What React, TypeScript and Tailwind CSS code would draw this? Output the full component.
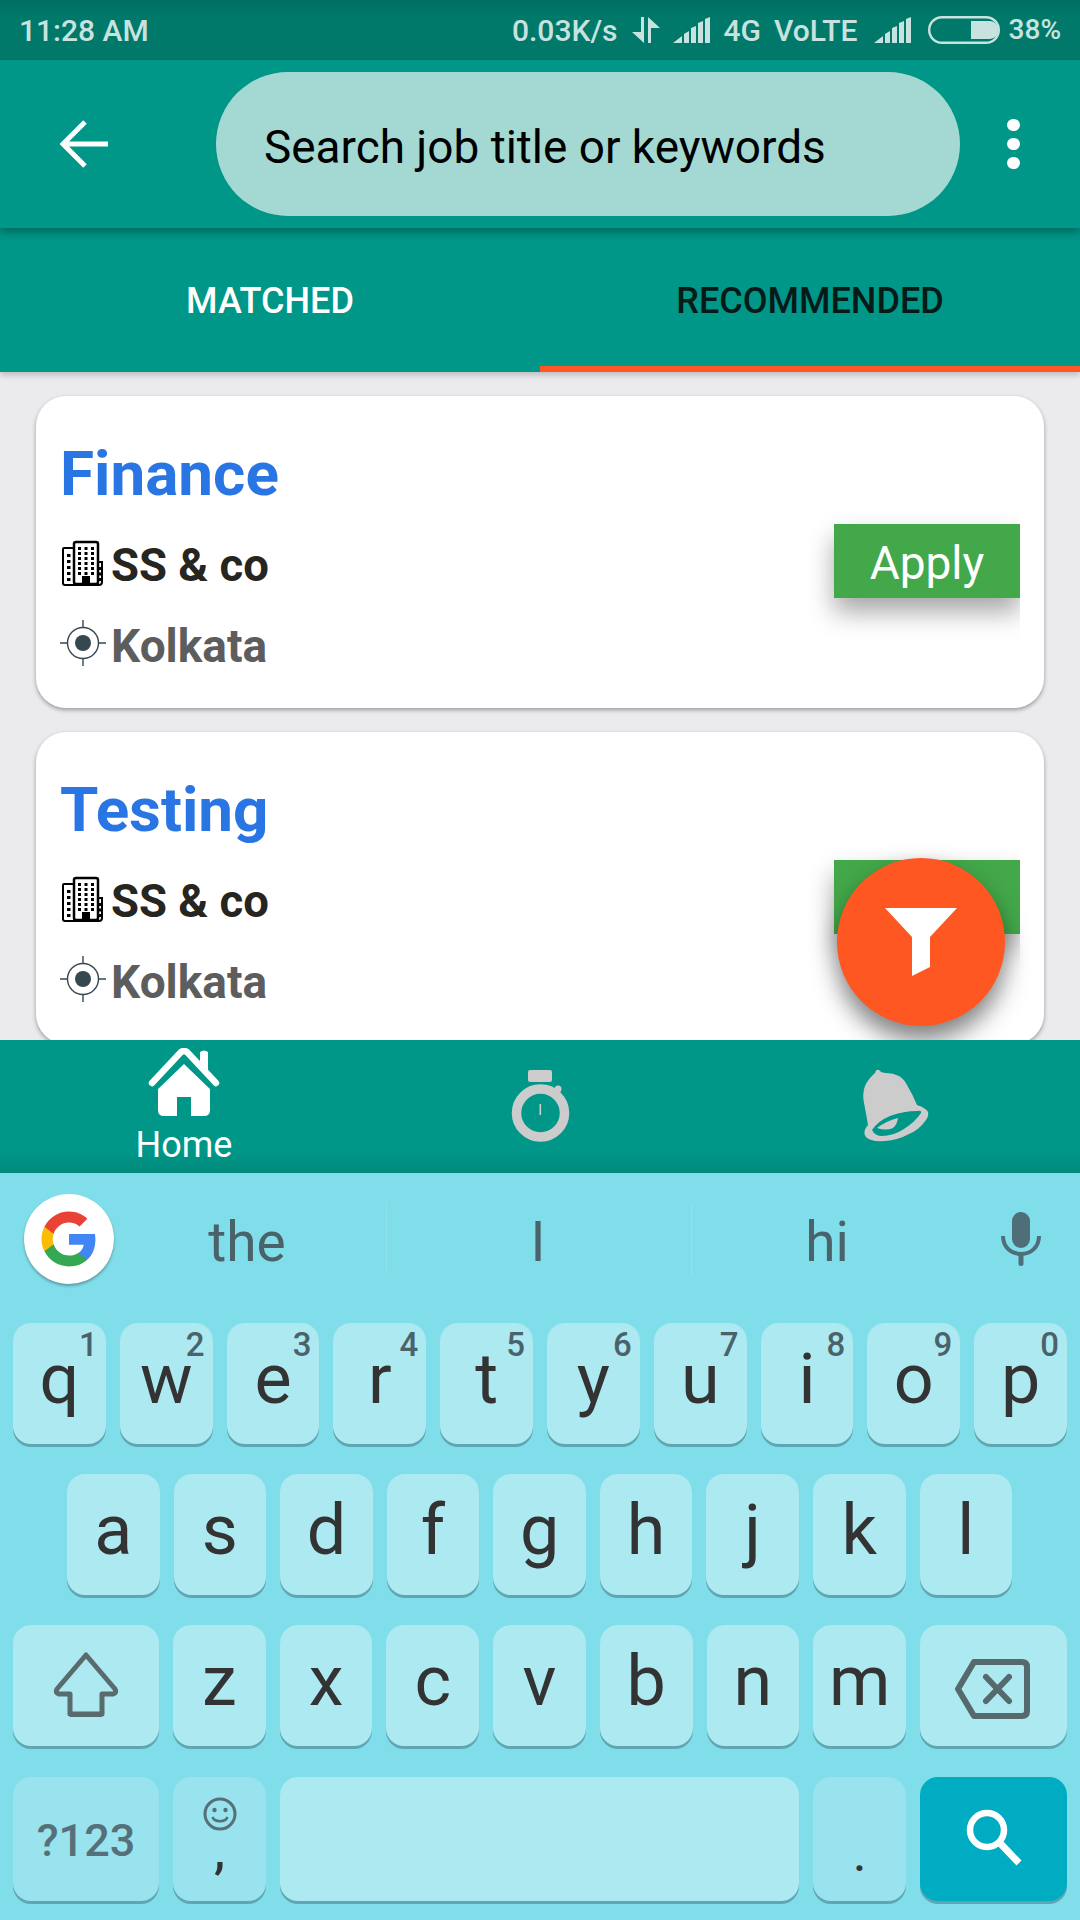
import React from "react";

const Building = () => (
  <svg width="42" height="46" viewBox="0 0 42 46" className="shrink-0 -mt-[6px]">
    <path d="M12 8H2a1 1 0 0 0-1 1v34a2 2 0 0 0 2 2h34a3 3 0 0 0 3-3V22H35" fill="none" stroke="#000" strokeWidth="2" />
    <rect x="12" y="2" width="24" height="42" rx="2" fill="#fff" stroke="#000" strokeWidth="2.5" />
    <rect x="20" y="36" width="8" height="9" fill="#000" />
    {[0, 1, 2, 3, 4, 5].map((r) =>
      [0, 1, 2].map((c) => <rect key={`${r}-${c}`} x={16 + c * 6.5} y={7 + r * 5} width="3" height="3" fill="#000" />)
    )}
    {[0, 1, 2, 3, 4].map((r) => <rect key={r} x="5" y={14 + r * 6} width="3.5" height="3" fill="#000" />)}
    {[0, 1, 2].map((r) => <rect key={r} x="36.5" y={27 + r * 5.5} width="2.5" height="3" fill="#000" />)}
  </svg>
);

const Target = () => (
  <svg width="46" height="46" viewBox="0 0 46 46" className="shrink-0 -mt-[6px]">
    <circle cx="23" cy="23" r="15.5" fill="none" stroke="#37474f" strokeWidth="1.4" />
    <circle cx="23" cy="23" r="8" fill="#37474f" />
    <path d="M23 0v7M23 39v7M0 23h7M39 23h7" stroke="#37474f" strokeWidth="1.4" />
  </svg>
);

const Job = ({ title }: { title: string }) => (
  <div className="h-[312px] shrink-0 rounded-[30px] bg-white shadow-[0_2px_4px_rgba(0,0,0,0.35)] flex justify-between pl-[26px] pr-[24px]">
    <div className="pt-[40px]">
      <div className="text-[62px] leading-[76px] font-bold text-[#2a75e4] -ml-[2px]">{title}</div>
      <div className="mt-[24px] flex items-center h-[60px]">
        <Building />
        <span className="ml-[7px] text-[45.5px] font-bold text-[#26251f] leading-[60px]">SS &amp; co</span>
      </div>
      <div className="mt-[20px] flex items-center h-[60px] -ml-[2px]">
        <Target />
        <span className="ml-[5px] text-[46px] font-bold text-[#5d5d5d] leading-[60px]">Kolkata</span>
      </div>
    </div>
    <div className="mt-[104px] h-[140px] overflow-hidden pl-[30px] pt-[24px]">
      <div className="w-[186px] h-[74px] bg-[#43a84a] text-white text-[46px] pt-[4px] flex items-center justify-center shadow-[0_14px_26px_rgba(0,0,0,0.35)]">
        Apply
      </div>
    </div>
  </div>
);

const Signal = () => (
  <svg width="38" height="26" viewBox="0 0 38 26" className="shrink-0" fill="#c8e3df">
    <path d="M0 26 9 19V26ZM11 17l5-3V26h-5ZM18 11l5-2V26h-5ZM25 6l5-2V26h-5ZM32 2l5-2V26h-5Z" />
  </svg>
);

const Key = ({ ch, num, className = "", children }: { ch?: string; num?: string; className?: string; children?: React.ReactNode }) => (
  <div className={`relative h-[121px] rounded-[18px] bg-[#ade9f1] shadow-[0_3px_0_#60a6b2] flex justify-center ${className}`}>
    {num && <span className="absolute right-[8px] top-[3px] text-[33px] leading-[38px] font-medium text-[#4a626a]">{num}</span>}
    {ch && <span className="text-[70px] leading-[90px] pt-[11px] text-[#333333]">{ch}</span>}
    {children}
  </div>
);

const row1 = [["q", "1"], ["w", "2"], ["e", "3"], ["r", "4"], ["t", "5"], ["y", "6"], ["u", "7"], ["i", "8"], ["o", "9"], ["p", "0"]];

export default function App() {
  return (
    <div className="w-[1080px] h-[1920px] relative overflow-hidden flex flex-col font-['Roboto',sans-serif] bg-[#80deea]">
      <div className="h-[60px] shrink-0 bg-gradient-to-b from-[#006f63] to-[#00796b] to-[30%] flex items-center text-[#c8e3df] text-[30px] font-medium">
        <span className="ml-[19px]">11:28 AM</span>
        <span className="ml-auto">0.03K/s</span>
        <svg width="28" height="26" viewBox="0 0 28 26" className="ml-[14px] shrink-0" fill="#c8e3df">
          <path d="M9 0h3v26L0 15h9ZM16 0l12 11H19V26h-3Z" />
        </svg>
        <span className="ml-[13px]"><Signal /></span>
        <span className="ml-[13px]">4G</span>
        <span className="ml-[13px]">VoLTE</span>
        <span className="ml-[16px]"><Signal /></span>
        <svg width="72" height="28" viewBox="0 0 72 28" className="ml-[16px] shrink-0">
          <rect x="1.2" y="1.2" width="69.6" height="25.6" rx="12.8" fill="none" stroke="#c8e3df" strokeWidth="2.4" />
          <path d="M43 5h19a8 8 0 0 1 8 9 8 8 0 0 1-8 9H43Z" fill="#c8e3df" />
        </svg>
        <span className="ml-[9px] mr-[19px] text-[28px]">38%</span>
      </div>

      <div className="h-[168px] shrink-0 bg-[#009688] relative z-10 flex items-center shadow-[0_4px_8px_rgba(0,0,0,0.3)]">
        <svg width="48" height="48" viewBox="0 0 48 48" className="ml-[60px] shrink-0">
          <path d="M25 2 3 24l22 22M3 24h45" fill="none" stroke="#fff" strokeWidth="5" />
        </svg>
        <div className="ml-[108px] w-[744px] h-[144px] rounded-full bg-[#a4d9d3] flex items-center pl-[48px] pt-[6px] text-[45.9px] text-black">
          Search job title or keywords
        </div>
        <div className="ml-[47px] flex flex-col gap-[7px]">
          <span className="w-[13px] h-[12px] rounded-full bg-white" />
          <span className="w-[13px] h-[12px] rounded-full bg-white" />
          <span className="w-[13px] h-[12px] rounded-full bg-white" />
        </div>
      </div>

      <div className="h-[144px] shrink-0 bg-[#009688] relative z-[5] flex shadow-[0_3px_6px_rgba(0,0,0,0.2)]">
        <div className="w-[540px] flex items-center justify-center text-[36px] font-medium text-white pt-[2px]">MATCHED</div>
        <div className="w-[540px] flex items-center justify-center text-[36px] font-medium text-[#061a18] border-b-[6px] border-[#ff5722] pt-[8px]">RECOMMENDED</div>
      </div>

      <div className="h-[668px] shrink-0 bg-[#ebeaed] overflow-hidden relative px-[36px] pt-[24px] flex flex-col gap-[24px]">
        <Job title="Finance" />
        <Job title="Testing" />
        <div className="absolute left-[837px] top-[486px] w-[168px] h-[168px] rounded-full bg-[#ff5722] shadow-[0_14px_24px_rgba(0,0,0,0.5)] flex items-center justify-center">
          <svg width="72" height="68" viewBox="0 0 72 68">
            <path d="M0 0H72L45 29V59L27 68V29Z" fill="#fff" />
          </svg>
        </div>
      </div>

      <div className="h-[133px] shrink-0 bg-gradient-to-b from-[#009688] from-[85%] to-[#00897b] flex relative">
        <div className="w-[368px] flex flex-col items-center pt-[8px]">
          <svg width="72" height="68" viewBox="148 1048 72 68">
            <path d="M152 1083 181 1052q3-2 6 0L216 1083" fill="none" stroke="#fff" strokeWidth="6.5" strokeLinecap="round" />
            <path d="M200 1065v-13q4-3 8 0v22z" fill="#fff" />
            <path d="M184 1064 210 1089v21q0 6-6 6h-13v-19h-14v19h-13q-6 0-6-6v-21Z" fill="#fff" />
          </svg>
          <span className="text-[36px] leading-[40px] text-white mt-[9px]">Home</span>
        </div>
        <div className="w-[344px] flex justify-center pt-[30px]">
          <svg width="60" height="72" viewBox="510 1070 60 72">
            <rect x="528" y="1070" width="24" height="12" rx="2" fill="#ccc" />
            <circle cx="540.5" cy="1113" r="24" fill="none" stroke="#ccc" strokeWidth="9.5" />
            <circle cx="558" cy="1089" r="3.5" fill="#ccc" />
            <rect x="539.5" y="1104" width="1.6" height="11" fill="#ccc" />
          </svg>
        </div>
        <div className="flex-1 pt-[29px] pl-[151px]">
          <svg width="68" height="74" viewBox="863 1069 68 74">
            <path
              fillRule="evenodd"
              fill="#ccc"
              d="M875 1073Q876 1069 879 1070Q881 1073 886 1073Q893 1073 899 1076Q904 1079 907 1085Q913 1095 917 1105Q926 1108 928 1112Q929 1116 926 1120Q919 1130 909 1134Q898 1140 885 1141Q870 1142 866 1137Q862 1132 868 1125Q866 1113 864 1103Q862 1093 865 1086Q868 1079 875 1073ZM872 1130Q875 1136 882 1136Q893 1136 904 1129Q915 1122 921 1113Q922 1110 917 1111Q904 1111 890 1116Q878 1121 872 1130Z"
            />
            <path d="M898 1118Q897 1125 893 1128Q886 1131 877 1128Q886 1121 898 1118Z" fill="#ccc" />
          </svg>
        </div>
      </div>

      <div className="flex-1 bg-[#80deea] flex flex-col">
        <div className="h-[150px] shrink-0 relative flex items-center">
          <div className="absolute left-[24px] top-[21px] w-[90px] h-[90px] rounded-full bg-white shadow-[0_2px_3px_rgba(0,0,0,0.3)] flex items-center justify-center">
            <svg width="60" height="60" viewBox="0 0 24 24">
              <path fill="#4285F4" d="M22.56 12.25c0-.78-.07-1.53-.2-2.25H12v4.26h5.92c-.26 1.37-1.04 2.53-2.21 3.31v2.77h3.57c2.08-1.92 3.28-4.74 3.28-8.09z" />
              <path fill="#34A853" d="M12 23c2.97 0 5.46-.98 7.28-2.66l-3.57-2.77c-.98.66-2.23 1.06-3.71 1.06-2.86 0-5.29-1.93-6.16-4.53H2.18v2.84C3.99 20.53 7.7 23 12 23z" />
              <path fill="#FBBC05" d="M5.84 14.09c-.22-.66-.35-1.36-.35-2.09s.13-1.43.35-2.09V7.07H2.18C1.43 8.55 1 10.22 1 12s.43 3.45 1.18 4.93l2.85-2.22.81-.62z" />
              <path fill="#EA4335" d="M12 5.38c1.62 0 3.06.56 4.21 1.64l3.15-3.15C17.45 2.09 14.97 1 12 1 7.7 1 3.99 3.47 2.18 7.07l3.66 2.84c.87-2.6 3.3-4.53 6.16-4.53z" />
            </svg>
          </div>
          <div className="ml-[114px] w-[272px] text-center text-[55px] text-[#4a626a] -mt-[11px] pr-[6px]">the</div>
          <div className="w-px h-[72px] bg-[#8fe3ed] -mt-[18px]" />
          <div className="w-[304px] text-center text-[55px] text-[#4a626a] -mt-[11px] pr-[2px]">I</div>
          <div className="w-px h-[72px] bg-[#8fe3ed] -mt-[18px]" />
          <div className="w-[272px] text-center text-[55px] text-[#4a626a] -mt-[11px] pr-[2px]">hi</div>
          <svg width="40" height="54" viewBox="0 0 40 54" className="absolute left-[1001px] top-[39px]">
            <rect x="11" y="0" width="18" height="36" rx="9" fill="#4e6f78" />
            <path d="M2 24c0 11 8 18 18 18s18-7 18-18" fill="none" stroke="#4e6f78" strokeWidth="4" />
            <rect x="17.5" y="40" width="5" height="14" rx="2.5" fill="#4e6f78" />
          </svg>
        </div>

        <div className="flex flex-col gap-[30px]">
          <div className="flex gap-[14px] px-[13px]">
            {row1.map(([c, n]) => <Key key={c} ch={c} num={n} className="flex-1" />)}
          </div>
          <div className="flex gap-[14px] pl-[67px] pr-[68px]">
            {["a", "s", "d", "f", "g", "h", "j", "k", "l"].map((c) => <Key key={c} ch={c} className="flex-1" />)}
          </div>
          <div className="flex gap-[14px] px-[13px]">
            <Key className="w-[146px] bg-[#a0e6f0] pt-[27px]">
              <svg width="68" height="66" viewBox="0 0 68 66">
                <path d="M34 3 63 37q2 4-2 5H50V62H18V42H7q-4-1-2-5Z" fill="none" stroke="#5a6b6e" strokeWidth="5" strokeLinejoin="round" />
                <path d="M18 60H50V65H18Z" fill="#5a6b6e" />
              </svg>
            </Key>
            {["z", "x", "c", "v", "b", "n", "m"].map((c) => <Key key={c} ch={c} className="flex-1" />)}
            <Key className="w-[147px] bg-[#a0e6f0] pt-[34px] pr-[2px]">
              <svg width="75" height="60" viewBox="0 0 75 60">
                <path d="M19 3H67q5 0 5 5V52q0 5-5 5H19L3 30Z" fill="none" stroke="#566a6d" strokeWidth="6" strokeLinejoin="round" />
                <path d="M31 18 54 42M54 18 31 42" stroke="#566a6d" strokeWidth="6" strokeLinecap="round" />
              </svg>
            </Key>
          </div>
          <div className="flex gap-[14px] px-[13px] mt-[1px]">
            <div className="w-[146px] h-[124px] rounded-[18px] bg-[#98e3ee] shadow-[0_3px_0_#60a6b2] flex items-center justify-center pt-[4px] text-[45px] font-medium text-[#56707a]">?123</div>
            <div className="w-[93px] h-[124px] rounded-[18px] bg-[#98e3ee] shadow-[0_3px_0_#60a6b2] flex flex-col items-center pt-[20px]">
              <svg width="34" height="34" viewBox="0 0 34 34">
                <circle cx="17" cy="17" r="15" fill="none" stroke="#56707a" strokeWidth="3" />
                <circle cx="11.5" cy="13" r="2.2" fill="#56707a" />
                <circle cx="22.5" cy="13" r="2.2" fill="#56707a" />
                <path d="M9.5 20c2 5.5 13 5.5 15 0" fill="none" stroke="#56707a" strokeWidth="2.5" />
              </svg>
              <span className="text-[50px] leading-[40px] font-medium text-[#333]">,</span>
            </div>
            <div className="flex-1 h-[124px] rounded-[18px] bg-[#ade9f1] shadow-[0_3px_0_#60a6b2]" />
            <div className="w-[93px] h-[124px] rounded-[18px] bg-[#98e3ee] shadow-[0_3px_0_#60a6b2] flex justify-center pt-[54px] text-[44px] leading-[50px] font-medium text-[#333]">.</div>
            <div className="w-[147px] h-[124px] rounded-[18px] bg-[#00acc1] shadow-[0_3px_0_#60a6b2] flex items-center justify-center">
              <svg width="60" height="60" viewBox="0 0 60 60">
                <circle cx="23" cy="21" r="17" fill="none" stroke="#fff" strokeWidth="6.5" />
                <path d="M35 33 55 54" stroke="#fff" strokeWidth="7" />
              </svg>
            </div>
          </div>
        </div>
      </div>
    </div>
  );
}
